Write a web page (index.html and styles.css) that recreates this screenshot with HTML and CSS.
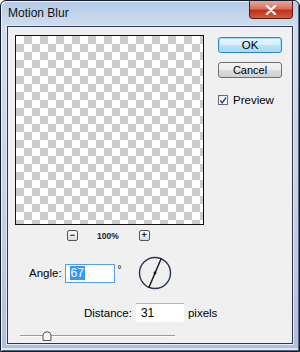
FILE: index.html
```html
<!DOCTYPE html>
<html>
<head>
<meta charset="utf-8">
<link rel="stylesheet" href="styles.css">
</head>
<body>
<div class="window">
  <div class="titlebar">
    <span class="title">Motion Blur</span>
    <div class="close"><svg width="12" height="10" viewBox="0 0 12 10"><path d="M2 1 L10 9 M10 1 L2 9" stroke="#fff" stroke-width="2.4" stroke-linecap="round"/></svg></div>
  </div>
  <div class="client">
    <div class="top">
      <div class="leftcol">
        <div class="preview"></div>
        <div class="zoombar">
          <span class="zbtn">−</span>
          <span class="zpct">100%</span>
          <span class="zbtn">+</span>
        </div>
      </div>
      <div class="rightcol">
        <div class="btn ok">OK</div>
        <div class="btn cancel">Cancel</div>
        <label class="check">
          <span class="box"><svg width="9" height="9" viewBox="0 0 9 9"><path d="M1.5 4.5 L3.6 7.2 L7.8 1.2" fill="none" stroke="#1c3f94" stroke-width="1.6"/></svg></span>
          <span>Preview</span>
        </label>
      </div>
    </div>
    <div class="row angle">
      <span class="lbl">Angle:</span>
      <div class="input focus"><span class="sel">67</span></div>
      <span class="deg">°</span>
      <svg class="dial" width="34" height="34" viewBox="0 0 34 34">
        <circle cx="17" cy="17" r="15.5" fill="none" stroke="#2a3555" stroke-width="1.4"/>
        <path d="M23.3 2.3 L10.8 31.7" stroke="#111" stroke-width="1.4"/>
        <circle cx="17" cy="17" r="1.4" fill="#111"/>
      </svg>
    </div>
    <div class="row distance">
      <span class="lbl">Distance:</span>
      <div class="input plain">31</div>
      <span class="unit">pixels</span>
    </div>
    <div class="slider">
      <div class="track"></div>
      <svg class="thumb" width="10" height="10" viewBox="0 0 10 10"><path d="M1 9.5 L1 4 Q1 1 5 0.8 Q9 1 9 4 L9 9.5 Z" fill="#f4f4f4" stroke="#555" stroke-width="1"/></svg>
    </div>
  </div>
</div>
</body>
</html>
```
FILE: styles.css
```css
html, body { margin: 0; padding: 0; }
body {
  width: 300px; height: 352px; overflow: hidden;
  font-family: "Liberation Sans", Arial, sans-serif;
  font-size: 11px; color: #000;
  background: #fff;
}
.window {
  box-sizing: border-box;
  width: 300px; height: 352px;
  display: flex; flex-direction: column;
  padding: 0 6px 7px 6px;
  border: 1px solid #151a2c;
  border-radius: 6px 6px 0 0;
  background: linear-gradient(to bottom, #b3cbe6 0px, #cfdeee 26px, #c3d3e6 200px, #aebfd6 352px);
  box-shadow: inset 1px 1px 0 #eef4fa, inset -1px -1px 0 #5a6680, inset 0 -3px 0 #dfe7f0;
}
.titlebar {
  height: 25px; flex: none;
  display: flex; align-items: flex-start;
}
.title {
  margin-top: 5px; margin-left: 1px; font-size: 12px; color: #111;
}
.close {
  margin-left: auto; margin-right: 0;
  width: 42px; height: 17px;
  border: 1px solid #5a1a14; border-top: none;
  border-radius: 0 0 4px 4px;
  background: linear-gradient(to bottom, #e9a99c 0%, #d8705d 45%, #c3301c 55%, #d45a3c 100%);
  display: flex; align-items: center; justify-content: center;
}
.client {
  flex: 1;
  background: #f0f0f0;
  border: 1px solid #2c3550;
  box-shadow: 0 0 0 1px #e6edf5;
  display: flex; flex-direction: column;
}
.top { display: flex; padding: 8px 0 0 7px; }
.leftcol { display: flex; flex-direction: column; }
.preview {
  box-sizing: border-box;
  width: 189px; height: 190px;
  border: 1px solid #111;
  background-color: #fff;
  background-image: conic-gradient(#cccccc 0 25%, #fff 0 50%, #cccccc 0 75%, #fff 0);
  background-size: 16px 16px;
}
.zoombar {
  display: flex; align-items: center;
  margin-top: 5px; height: 11px;
  padding-left: 52px;
}
.zbtn {
  box-sizing: border-box;
  width: 11px; height: 11px;
  border: 1px solid #555; border-radius: 2px;
  background: linear-gradient(#fafafa, #dcdcdc);
  font-size: 9px; line-height: 9px; font-weight: bold;
  display: flex; justify-content: center; align-items: center;
  color: #222;
}
.zpct { font-size: 8.5px; font-weight: bold; margin: 0 20px 0 19px; color: #222; }
.rightcol {
  display: flex; flex-direction: column;
  margin-left: 14px; margin-top: 2px;
}
.btn {
  box-sizing: border-box;
  width: 64px; height: 16px;
  border-radius: 3px;
  display: flex; align-items: center; justify-content: center;
  font-size: 11.5px;
}
.ok {
  border: 1px solid #2f88c4;
  background: linear-gradient(#eaf6fd 0%, #d6eefb 50%, #bde3f8 51%, #a8d8f4 100%);
  box-shadow: inset 0 0 0 1px #9ee0fa;
}
.cancel {
  margin-top: 9px;
  border: 1px solid #707070;
  background: linear-gradient(#f4f4f4 0%, #ececec 50%, #dcdcdc 51%, #d0d0d0 100%);
  font-size: 11px;
}
.check {
  display: flex; align-items: center; gap: 5px;
  margin-top: 16px; font-size: 11.5px;
}
.box {
  box-sizing: border-box;
  width: 10px; height: 10px;
  border: 1px solid #6a6a6a;
  background: linear-gradient(135deg, #e8e8e8, #fff);
  display: flex; align-items: center; justify-content: center;
}
.row { display: flex; align-items: center; font-size: 11.5px; }
.angle { margin-top: 15px; padding-left: 21px; }
.input {
  box-sizing: border-box;
  height: 19px;
  background: #fff;
  display: flex; align-items: center;
  font-size: 12px;
}
.focus {
  width: 50px; margin-left: 3px;
  border: 1px solid #569de5;
  padding-left: 4px;
}
.sel { background: #3399ff; color: #fff; padding: 0 1px; line-height: 14px; }
.deg { font-size: 10px; margin-left: 3px; align-self: flex-start; margin-top: 8px; }
.dial { margin-left: 16px; }
.distance { margin-top: 13px; padding-left: 76px; }
.plain {
  width: 48px; margin-left: 4px;
  border-top: 1px solid #b8b8b8;
  padding-left: 5px;
}
.unit { margin-left: 4px; }
.slider {
  position: relative;
  margin: 9px 0 0 12px;
  width: 155px; height: 10px;
}
.track {
  margin-top: 4px;
  height: 1px; background: #9a9a9a;
  box-shadow: 0 1px 0 #fff;
}
.thumb { position: absolute; left: 22px; top: 0; }
```
